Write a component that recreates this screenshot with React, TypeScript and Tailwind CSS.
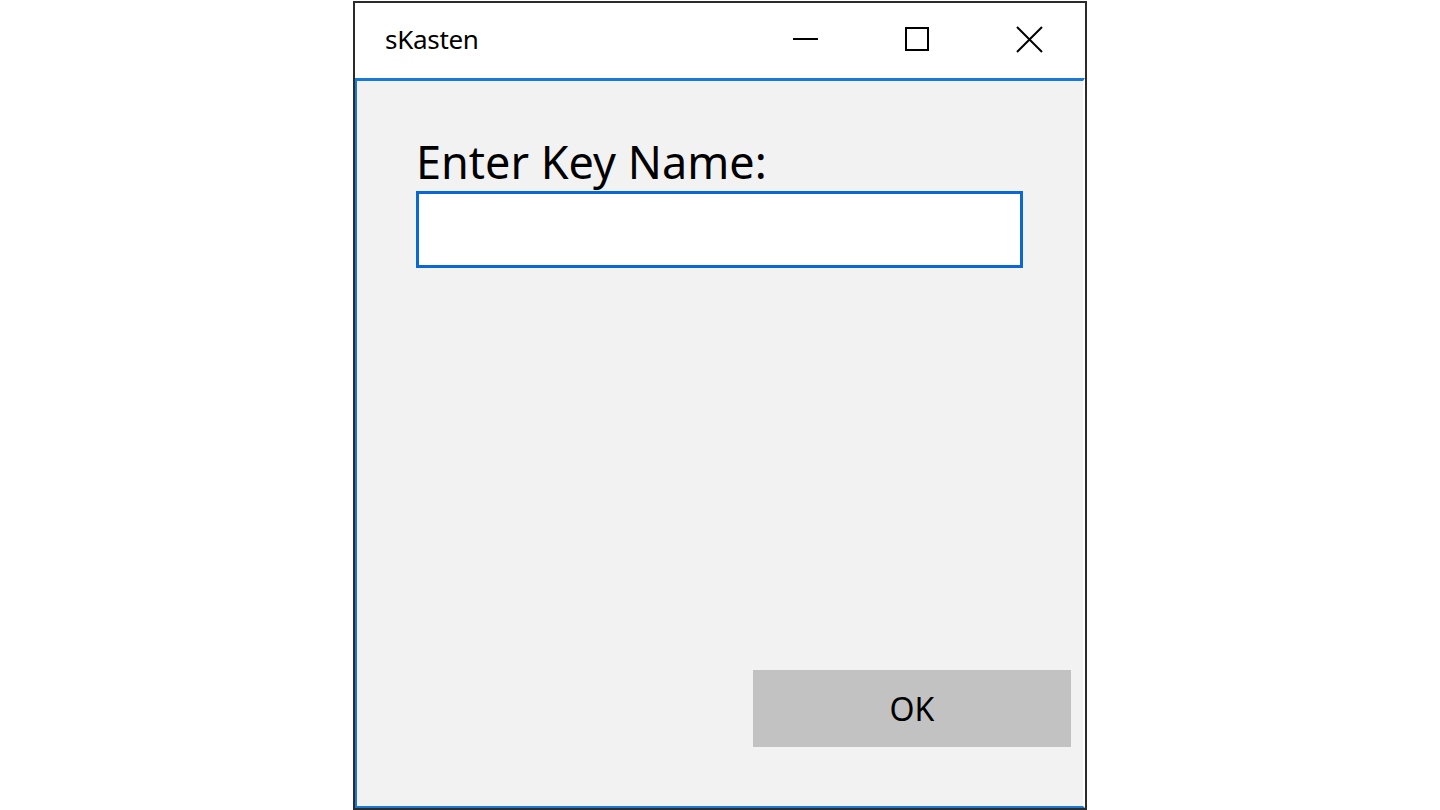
export default function App() {
  return (
    <div className="w-[1440px] h-[810px] bg-white flex justify-center" style={{ fontFamily: '"Noto Sans", "Open Sans", sans-serif' }}>
      <div className="w-[734px] h-[809px] mt-px border-2 border-[#2b2b2b] flex flex-col bg-white">
        {/* title bar */}
        <div className="h-[75px] flex items-center pl-[30px] pb-[3px] bg-white">
          <span className="text-[26px] text-black tracking-[-0.3px]">sKasten</span>
          <div className="ml-auto flex items-center h-full">
            <div className="w-[112px] h-full flex items-center justify-center">
              <div className="w-[25px] h-[2px] bg-black" />
            </div>
            <div className="w-[112px] h-full flex items-center justify-center">
              <div className="w-[24px] h-[24px] border-2 border-black" />
            </div>
            <div className="w-[112px] h-full flex items-center justify-center">
              <svg width="27" height="27" viewBox="0 0 27 27">
                <path d="M1 1 L26 26 M26 1 L1 26" stroke="#000" strokeWidth="2" fill="none" />
              </svg>
            </div>
          </div>
        </div>
        {/* content */}
        <div className="flex-1 border-2 border-t-[3px] border-[#1979d6] border-r-white bg-[#f2f2f2] flex flex-col pl-[59px] pr-[12px] pt-[52px] pb-[59px]">
          <label className="text-[45px] leading-[58px] tracking-[0px] text-black">Enter Key Name:</label>
          <div className="w-[607px] h-[77px] border-[3px] border-[#0a68d4] bg-white" />
          <div className="mt-auto flex justify-end">
            <button className="w-[318px] h-[77px] bg-[#c2c2c2] text-[32px] text-black">OK</button>
          </div>
        </div>
      </div>
    </div>
  );
}
